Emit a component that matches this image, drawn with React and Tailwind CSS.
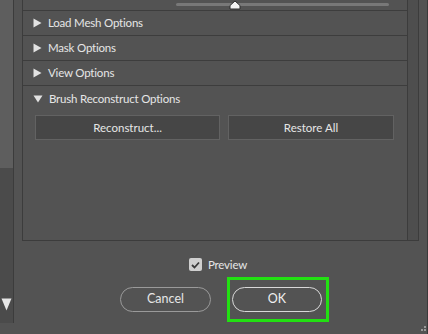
import React from 'react'

const font = { fontFamily: 'Lato, "Noto Sans", sans-serif' }

function RightTri() {
  return (
    <svg width="9" height="10" viewBox="0 0 9 10" className="shrink-0">
      <path d="M0.5 0.5 L8.5 5 L0.5 9.5 Z" fill="#e2e2e2" />
    </svg>
  )
}

function DownTri() {
  return (
    <svg width="10" height="8" viewBox="0 0 10 8" className="shrink-0">
      <path d="M0.5 0.5 L9.5 0.5 L5 7.5 Z" fill="#e2e2e2" />
    </svg>
  )
}

function Row({ label, open, last }) {
  return (
    <div
      className={
        'flex h-[25px] items-center gap-[6px] pl-[10px] text-[11.5px] text-[#e6e6e6] ' +
        (last ? '' : 'border-b border-[#3d3d3d]')
      }
    >
      {open ? <DownTri /> : <RightTri />}
      <span className="leading-none tracking-[-0.2px]">{label}</span>
    </div>
  )
}

export default function App() {
  return (
    <div className="relative flex h-[334px] w-[428px] overflow-hidden bg-[#535353]" style={font}>
      {/* left scrollbar */}
      <div className="flex h-[323px] w-[14px] shrink-0 flex-col border-r border-[#3c3c3c]">
        <div className="h-[168px] bg-[#5e5e5e]" />
        <div className="flex flex-1 flex-col items-center justify-end bg-[#4b4b4b] pb-[12px]">
          <svg width="11" height="13" viewBox="0 0 11 13">
            <path d="M0.5 0.5 L10.5 0.5 L5.5 12.5 Z" fill="#e6e6e6" />
          </svg>
        </div>
      </div>

      <div className="ml-[8px] flex w-[397px] shrink-0 flex-col">
        {/* options panel */}
        <div className="flex h-[241px] border-b border-l border-r border-[#3c3c3c]">
          <div className="flex flex-1 flex-col">
            <div className="relative h-[11px] border-b border-[#3d3d3d]">
              <div className="absolute left-[153px] top-[3px] h-[3px] w-[213px] rounded-full bg-[#787878]" />
              <svg className="absolute left-[206px] top-[0px]" width="12" height="10" viewBox="0 0 12 10">
                <path d="M1 9 L1 5.5 L6 1 L11 5.5 L11 9 Z" fill="#f4f4f4" stroke="#2e2e2e" strokeWidth="1" />
              </svg>
            </div>
            <Row label="Load Mesh Options" />
            <Row label="Mask Options" />
            <Row label="View Options" />
            <Row label="Brush Reconstruct Options" open last />
            <div className="mt-[4px] flex gap-[8px] pl-[12px]">
              <button className="h-[25px] w-[185px] border border-[#626262] bg-[#464646] text-[11.5px] text-[#e6e6e6]">
                Reconstruct...
              </button>
              <button className="h-[25px] w-[166px] border border-[#626262] bg-[#464646] text-[11.5px] text-[#e6e6e6]">
                Restore All
              </button>
            </div>
          </div>
          <div className="w-[11px] border-l border-[#3c3c3c] bg-[#4e4e4e]" />
        </div>

        {/* preview */}
        <div className="mt-[17px] flex items-center gap-[6px] pl-[167px]">
          <div className="flex h-[13px] w-[13px] items-center justify-center rounded-[2px] bg-[#cfcfcf]">
            <svg width="9" height="8" viewBox="0 0 9 8">
              <path d="M1 4 L3.5 6.5 L8 1.5" fill="none" stroke="#3a3a3a" strokeWidth="1.8" />
            </svg>
          </div>
          <span className="text-[11.5px] leading-none tracking-[-0.2px] text-[#e6e6e6]">Preview</span>
        </div>

        {/* buttons */}
        <div className="mt-[6px] flex items-center pl-[98px]">
          <button className="h-[25px] w-[91px] rounded-full border border-[#9a9a9a] text-[12.5px] text-[#e6e6e6]">
            Cancel
          </button>
          <div className="ml-[16px] border-[3px] border-[#22e012] pb-[7px] pl-[2px] pr-[4px] pt-[7px]">
            <button className="block h-[25px] w-[90px] rounded-full border-[1.5px] border-[#d8d8d8] text-[12.5px] text-[#f0f0f0]">
              OK
            </button>
          </div>
        </div>
      </div>

      {/* right edge */}
      <div className="ml-[8px] h-full w-px bg-[#3a3a3a]" />

      {/* resize grip */}
      <svg className="absolute bottom-[1px] right-[1px]" width="8" height="8" viewBox="0 0 8 8">
        <rect x="5" y="1" width="2" height="2" fill="#9a9a9a" />
        <rect x="2" y="4" width="2" height="2" fill="#9a9a9a" />
        <rect x="5" y="4" width="2" height="2" fill="#9a9a9a" />
      </svg>
    </div>
  )
}
